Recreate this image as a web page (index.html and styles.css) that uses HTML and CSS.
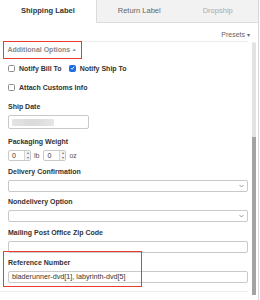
FILE: index.html
```html
<!DOCTYPE html>
<html>
<head>
<meta charset="utf-8">
<link rel="stylesheet" href="styles.css">
</head>
<body>
<div class="panel">
  <div class="tabs">
    <div class="tab active">Shipping Label</div>
    <div class="tab">Return Label</div>
    <div class="tab muted">Dropship</div>
  </div>
  <div class="presets-row"><span class="presets">Presets <span class="caret">▾</span></span></div>
  <div class="body-row">
    <div class="content">
      <div class="adv-box"><span class="adv">Additional Options <span class="up">▲</span></span></div>
      <div class="check-row first">
        <label class="check"><span class="box"></span>Notify Bill To</label>
        <label class="check"><span class="box on"><svg viewBox="0 0 8 8" width="6" height="6"><path d="M1.5 4.2 L3.3 6 L6.6 2" fill="none" stroke="#fff" stroke-width="1.4"/></svg></span>Notify Ship To</label>
      </div>
      <div class="check-row">
        <label class="check"><span class="box"></span>Attach Customs Info</label>
      </div>
      <div class="field">
        <div class="label">Ship Date</div>
        <div class="input date"><span class="blur"></span></div>
      </div>
      <div class="field weight">
        <div class="label">Packaging Weight</div>
        <div class="weights">
          <div class="num"><span class="val">0</span><span class="spin"><span class="arr">▴</span><span class="arr">▾</span></span></div>
          <span class="unit">lb</span>
          <div class="num"><span class="val">0</span><span class="spin"><span class="arr">▴</span><span class="arr">▾</span></span></div>
          <span class="unit">oz</span>
        </div>
      </div>
      <div class="field">
        <div class="label">Delivery Confirmation</div>
        <div class="input select"><svg class="chev" viewBox="0 0 6 4" width="5" height="4"><path d="M0.6 0.8 L3 3.2 L5.4 0.8" fill="none" stroke="#777" stroke-width="0.9"/></svg></div>
      </div>
      <div class="field">
        <div class="label">Nondelivery Option</div>
        <div class="input select"><svg class="chev" viewBox="0 0 6 4" width="5" height="4"><path d="M0.6 0.8 L3 3.2 L5.4 0.8" fill="none" stroke="#777" stroke-width="0.9"/></svg></div>
      </div>
      <div class="field">
        <div class="label">Mailing Post Office Zip Code</div>
        <div class="input"></div>
      </div>
      <div class="field ref">
        <div class="label">Reference Number</div>
        <div class="input text">bladerunner-dvd[1], labyrinth-dvd[5]</div>
        <div class="ref-box"></div>
      </div>
      <div class="sep"></div>
    </div>
    <div class="scroll">
      <div class="track"></div>
      <div class="thumb"></div>
    </div>
  </div>
</div>
</body>
</html>
```
FILE: styles.css
```css
* { box-sizing: border-box; }
html, body { margin: 0; padding: 0; background: #fff; }
body {
  font-family: "Liberation Sans", Arial, sans-serif;
  font-size: 7px;
  color: #333;
}
.panel {
  width: 259px;
  height: 300px;
  border-right: 1px solid #d8d8d8;
  overflow: hidden;
}
.tabs {
  display: flex;
  height: 23px;
}
.tab {
  padding: 0 21px;
  line-height: 22px;
  font-size: 7.5px;
  background: #f2f2f2;
  color: #666;
  border-bottom: 1px solid #dcdcdc;
  white-space: nowrap;
}
.tab.active {
  background: #fff;
  color: #333;
  font-weight: bold;
  border-bottom: none;
}
.tab.active + .tab { border-left: 1px solid #dcdcdc; }
.tab.muted { color: #aaa; flex: 1; }
.presets-row {
  height: 18px;
  display: flex;
  justify-content: flex-end;
  align-items: center;
  padding: 4px 8px 0 0;
}
.presets { color: #666; font-size: 7px; }
.caret { font-size: 6px; }
.body-row {
  display: flex;
  height: 259px;
}
.content {
  width: 248px;
  border-top: 1px solid #ececec;
  padding-left: 8px;
}
.adv-box {
  display: inline-block;
  margin-left: -5px;
  margin-top: -1px;
  width: 79px;
  height: 18px;
  border: 1.5px solid #ea3b2c;
  padding: 3px 0 0 3.5px;
}
.adv {
  color: #8a8a8a;
  font-weight: bold;
  font-size: 7px;
  line-height: 10px;
}
.up { font-size: 4.5px; vertical-align: 1px; }
.check-row {
  display: flex;
  gap: 7px;
  height: 10px;
  align-items: center;
  margin-top: 9px;
}
.check-row.first { margin-top: 4px; }
.check {
  display: flex;
  align-items: center;
  font-weight: bold;
  font-size: 7px;
  color: #333;
}
.box {
  width: 7px;
  height: 7px;
  border: 1px solid #8c8c8c;
  border-radius: 1.5px;
  margin-right: 4px;
  display: flex;
  align-items: center;
  justify-content: center;
  background: #fff;
}
.box.on { background: #1f6fe0; border-color: #1f6fe0; }
.field { margin-top: 5.5px; }
.check-row + .field { margin-top: 10px; }
.field.weight { margin-top: 8px; }
.label {
  font-weight: bold;
  font-size: 7px;
  line-height: 10px;
  color: #333;
  margin-bottom: 3px;
}
.input {
  position: relative;
  width: 240px;
  height: 12px;
  border: 1px solid #c9c9c9;
  border-radius: 2px;
  background: #fff;
}
.input.date {
  width: 81px;
  height: 14px;
  padding: 3px 0 0 3px;
}
.blur {
  display: block;
  width: 42px;
  height: 7px;
  background: linear-gradient(90deg, #e4e4e4, #dadada 50%, #e6e6e6);
  border-radius: 1px;
  filter: blur(0.6px);
}
.input.select {
  display: flex;
  justify-content: flex-end;
  align-items: center;
  padding-right: 3px;
}
.input.text {
  font-size: 7.2px;
  line-height: 10px;
  padding-left: 3px;
  color: #333;
}
.weights {
  display: flex;
  align-items: center;
  height: 11px;
}
.num {
  display: flex;
  width: 23px;
  height: 11px;
  border: 1px solid #c9c9c9;
  border-radius: 2px;
  background: #fff;
}
.val {
  flex: 1;
  padding-left: 3px;
  line-height: 9px;
  font-size: 7px;
}
.spin {
  width: 6px;
  display: flex;
  flex-direction: column;
  border-left: 1px solid #d6d6d6;
  background: #f4f4f4;
}
.arr {
  flex: 1;
  font-size: 4px;
  line-height: 4.5px;
  text-align: center;
  color: #777;
}
.unit {
  margin: 0 4px 0 3px;
  color: #555;
  font-size: 7px;
}
.ref { position: relative; }
.ref-box {
  position: absolute;
  left: -5px;
  top: -7px;
  width: 139px;
  height: 36px;
  border: 1.5px solid #ea3b2c;
}
.sep {
  margin-top: 8px;
  margin-left: -8px;
  height: 1px;
  background: #ececec;
}
.scroll {
  width: 10px;
  padding: 1px 2px 0 4px;
  display: flex;
  flex-direction: column;
}
.track {
  height: 95px;
  background: #e3e3e3;
  border-radius: 2px 2px 0 0;
}
.thumb {
  height: 158px;
  background: #a3a3a3;
}
```
